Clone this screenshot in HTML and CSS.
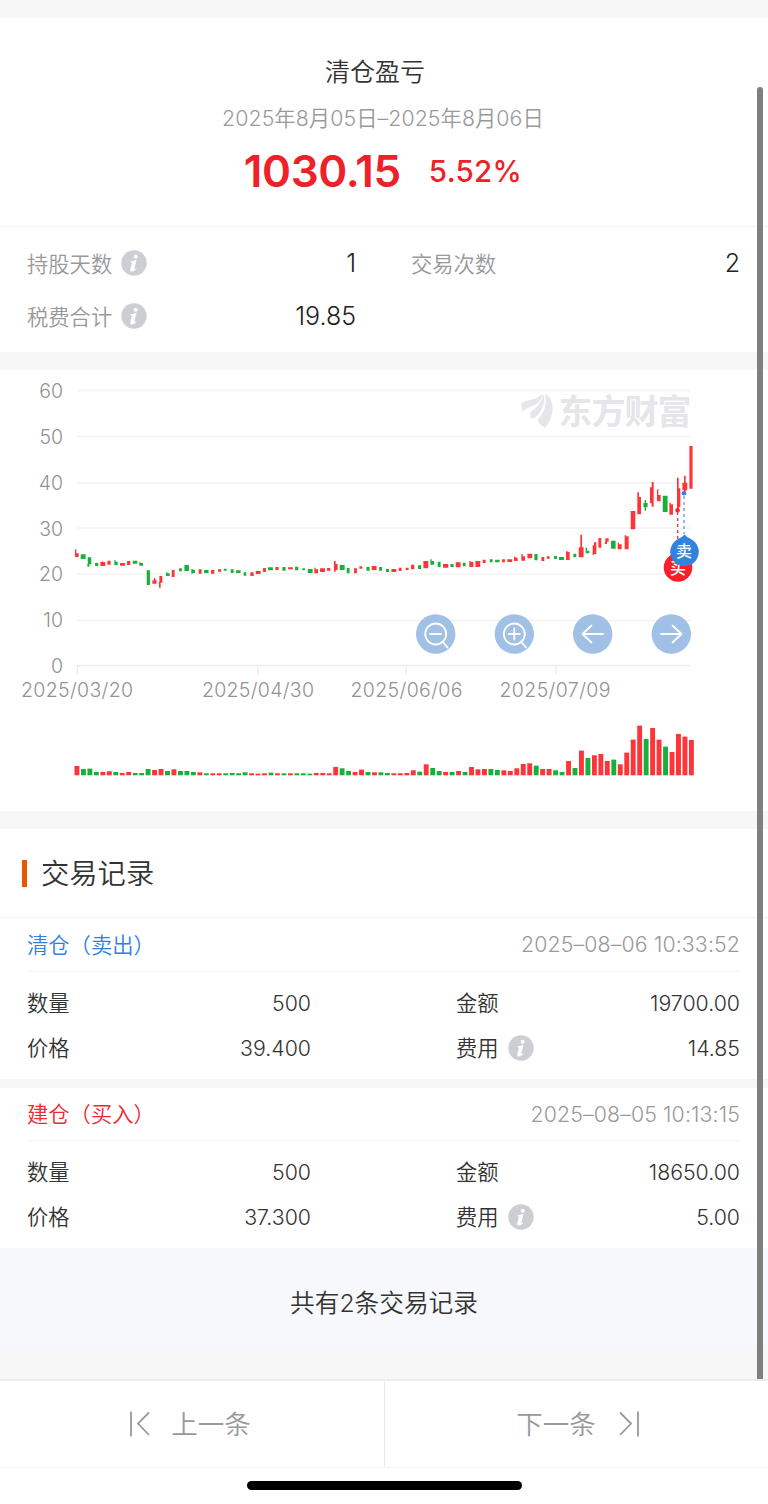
FILE: index.html
```html
<!DOCTYPE html>
<html lang="zh-CN">
<head>
<meta charset="utf-8">
<title>清仓盈亏</title>
<link rel="stylesheet" href="styles.css">
</head>
<body>
<svg width="0" height="0" class="defs">
  <symbol id="info" viewBox="0 0 26 26">
    <circle cx="13" cy="13" r="12.7" fill="#cdced3"/>
    <circle cx="14.7" cy="6.800" r="2" fill="#fff"/>
    <path d="M9.600 11.300Q12.500 11 15.600 9.800L13.300 18.800Q13.300 19.600 15.700 17.800Q13.700 21.600 11.200 21.600Q8.700 21.600 9.300 19L10.900 13Q11 12.200 9.600 12.300Z" fill="#fff"/>
  </symbol>
</svg>
<main class="page">
  <section class="summary">
    <h1 class="title">清仓盈亏</h1>
    <div class="period">2025年8月05日–2025年8月06日</div>
    <div class="profit"><span class="amount">1030.15</span><span class="percent">5.52%</span></div>
    <div class="stats">
      <div class="stat"><span>持股天数</span><svg class="info"><use href="#info"/></svg><b>1</b></div>
      <div class="stat"><span>交易次数</span><b>2</b></div>
      <div class="stat"><span>税费合计</span><svg class="info"><use href="#info"/></svg><b>19.85</b></div>
    </div>
  </section>
  <section class="chart">
    <svg width="768" height="441" viewBox="0 370 768 441">
      <path class="grid" d="M77 390.5H691M77 436.5H691M77 483H691M77 528H691M77 574H691M77 620.5H691"/>
      <path class="axis" d="M77 665.5H691M77.5 665v9M258 665v9M406 665v9M556 665v9"/>
      <g class="label" text-anchor="end">
        <text x="63" y="397.5">60</text><text x="63" y="443.5">50</text><text x="63" y="489.5">40</text><text x="63" y="535.5">30</text><text x="63" y="581">20</text><text x="63" y="627">10</text><text x="63" y="673">0</text>
      </g>
      <g class="label">
        <text x="21" y="697" textLength="112">2025/03/20</text><text x="202" y="697" textLength="112">2025/04/30</text><text x="350.500" y="697" textLength="112">2025/06/06</text><text x="499.500" y="697" textLength="111">2025/07/09</text>
      </g>
      <g class="mark">
        <path transform="translate(500 370) scale(.33333)" d="M64 98Q84 91 99 88Q118 82 128 70Q125 95 104 106Q80 112 68 125Q64 110 64 98ZM131 72Q136 100 122 123Q112 141 95 147Q88 137 91 126Q120 112 131 72ZM136 70Q158 88 158 118Q155 150 136 173Q118 165 113 149Q144 118 136 70Z"/>
        <text x="558.500" y="423.500" textLength="133">东方财富</text>
      </g>
      <g id="candles"></g>
      <path d="M677.700 512V541" stroke="#ef2f3b" stroke-width="1.300" stroke-dasharray="3 3"/>
      <path d="M684 496V534" stroke="#5c9ae8" stroke-width="1.300" stroke-dasharray="3 3"/>
      <circle cx="677.600" cy="510.300" r="2.300" fill="#f7262d"/><circle cx="684" cy="493.200" r="2.300" fill="#3482e0"/>
      <circle cx="678" cy="567.500" r="14.300" fill="#f72028"/><text class="pin" x="678" y="574">买</text>
      <path d="M684.500 534.500Q687 537.500 690.500 538.800A14.300 14.300 0 1 1 678.500 538.800Q682 537.500 684.500 534.500Z" fill="#3482e0"/><text class="pin" x="684" y="556.500">卖</text>
      <g id="volumes"></g>
      <g class="tool"><circle cx="435.700" cy="634" r="19.700"/><path d="M430 634h11M442.500 641.500l5 6"/><circle class="lens" cx="435.700" cy="634" r="10.500"/></g>
      <g class="tool"><circle cx="514.300" cy="634" r="19.700"/><path d="M508.800 634h11M514.300 628.500v11M521 641.500l5 6"/><circle class="lens" cx="514.300" cy="634" r="10.500"/></g>
      <g class="tool"><circle cx="592.700" cy="634" r="19.700"/><path d="M603 634H582.500M591.500 625.500l-9 8.500l9 8.500"/></g>
      <g class="tool"><circle cx="671.300" cy="634" r="19.700"/><path d="M661 634H681.500M672.500 625.500l9 8.500l-9 8.500"/></g>
    </svg>
  </section>
  <section class="records">
    <h2 class="heading"><span>交易记录</span></h2>
    <article class="record">
      <header class="record-head sell"><span>清仓（卖出）</span><time>2025–08–06 10:33:52</time></header>
      <div class="fields">
        <div class="field left"><span>数量</span><b>500</b></div><div class="field"><span>金额</span><b>19700.00</b></div>
        <div class="field left"><span>价格</span><b>39.400</b></div><div class="field"><span>费用</span><svg class="info"><use href="#info"/></svg><b>14.85</b></div>
      </div>
    </article>
    <article class="record">
      <header class="record-head buy"><span>建仓（买入）</span><time>2025–08–05 10:13:15</time></header>
      <div class="fields">
        <div class="field left"><span>数量</span><b>500</b></div><div class="field"><span>金额</span><b>18650.00</b></div>
        <div class="field left"><span>价格</span><b>37.300</b></div><div class="field"><span>费用</span><svg class="info"><use href="#info"/></svg><b>5.00</b></div>
      </div>
    </article>
  </section>
  <div class="total">共有2条交易记录</div>
  <nav class="pager">
    <a class="prev"><svg width="22" height="28"><path d="M2 1.500V26.500M20 2.500L9 13.500L20 25"/></svg><span>上一条</span></a>
    <a class="next"><span>下一条</span><svg width="22" height="28"><path d="M20 1.500V26.500M2 2.500L13 13.500L2 25"/></svg></a>
  </nav>
  <div class="home"><i></i></div>
  <div class="scrollbar"></div>
</main>
<script src="chart.js"></script>
</body>
</html>
```

FILE: styles.css
```css
* { box-sizing: border-box; }
body { margin: 0; background: #f7f7f7; font-family: Inter, "Noto Sans CJK SC", sans-serif; font-weight: 350; color: #333; }
b { font-weight: 350; }
.defs { position: absolute; }
.page { position: relative; width: 768px; height: 1504px; padding-top: 18px; display: flex; flex-direction: column; overflow: hidden; }
.summary { height: 334px; background: #fff; flex: none; }
.title { margin: 0; padding-top: 36px; font-size: 25px; line-height: 36px; font-weight: 350; text-align: center; padding-right: 18px; }
.period { margin-top: 13px; font-size: 21.300px; line-height: 31px; text-align: center; color: #999; padding-right: 2px; letter-spacing: .08px; }
.profit { display: flex; justify-content: center; align-items: center; gap: 28px; height: 93px; padding-bottom: 18px; border-bottom: 1px solid #f3f3f3; color: #f02028; font-weight: 500; padding-right: 2px; }
.amount { font-size: 44px; letter-spacing: -.4px; font-weight: 570; }
.percent { font-size: 29.500px; letter-spacing: .3px; }
.stats { display: grid; grid-template-columns: 329px 329px; column-gap: 55px; grid-auto-rows: 53px; padding: 9.500px 28px 0 27px; }
.stat, .field { display: flex; align-items: center; }
.stat { font-size: 21.300px; color: #999; }
.stat span { padding-bottom: 2px; }
.stat b { margin-left: auto; font-size: 25px; color: #222; }
.info { width: 26px; height: 26px; margin-left: 9px; }
.chart { height: 441px; margin: 18px 0; background: #fff; flex: none; }
.chart svg { display: block; }
.grid, .axis { fill: none; stroke: #f2f2f2; stroke-width: 1.500; }
.axis { stroke: #ededed; }
.label { font-size: 19.500px; fill: #929292; }
.mark { fill: #e5e5ea; }
.mark text { font: 700 34px "Noto Sans CJK SC", sans-serif; }
.pin { font: 500 16px "Noto Sans CJK SC", sans-serif; fill: #fff; text-anchor: middle; }
.red { fill: #ff3439; }
.green { fill: #18b03d; }
.tool circle { fill: #a1c0e5; }
.tool path, .tool .lens { fill: none; stroke: #fff; stroke-width: 1.800; stroke-linecap: round; stroke-linejoin: round; }
.records { flex: none; height: 419px; }
.heading { margin: 0; height: 89px; padding-left: 22px; display: flex; align-items: center; gap: 14px; font-size: 28.300px; font-weight: 350; background: #fff; border-bottom: 1px solid #f3f3f3; }
.heading::before { content: ""; width: 5px; height: 27px; background: #ea5504; }
.heading span { padding-bottom: 4px; }
.record { height: 161px; background: #fff; padding: 0 28px 0 27px; font-size: 21.300px; }
.record + .record { margin-top: 9px; height: 160px; }
.record-head { height: 54px; display: flex; align-items: center; justify-content: space-between; border-bottom: 1px solid #f3f3f3; }
.record-head span { padding-bottom: 3px; }
.record-head time { padding-bottom: 1px; }
.buy { height: 53px; }
.sell span { color: #2f80e2; }
.buy span { color: #ee2730; }
time { color: #999; letter-spacing: .13px; }
.fields { display: grid; grid-template-columns: 284px 284px; column-gap: 145px; grid-auto-rows: 44.500px; padding-top: 9px; }
.field span { padding-bottom: 3px; }
.field b { margin-left: auto; }
.total { flex: none; height: 131px; padding-top: 37px; text-align: center; font-size: 24.700px; line-height: 36px; background: linear-gradient(#f7f8fb 0 75%, #f7f7f7 75%); }
.pager { flex: none; height: 89px; display: grid; grid-template-columns: 385px 1fr; background: #fff; border-top: 2px solid #ededed; border-bottom: 1px solid #f3f3f3; }
.pager a { display: flex; align-items: center; justify-content: center; gap: 20px; font-size: 26.500px; color: #999; }
.pager span { padding-bottom: 3px; }
.pager svg { fill: none; stroke: #999; stroke-width: 1.800; }
.pager .prev { border-right: 1px solid #eaeaea; padding-right: 4px; }
.pager .next { gap: 22px; padding-left: 3px; }
.home { flex: 1; background: #fff; display: flex; justify-content: center; padding-top: 13px; }
.home i { width: 275px; height: 9px; border-radius: 5px; background: #000; }
.scrollbar { position: absolute; left: 757px; top: 87px; width: 5.500px; height: 1292px; border-radius: 3px 3px 0 0; background: #7f7f7f; }
```

FILE: chart.js
```js
const NS = "http://www.w3.org/2000/svg";

function addPath(parent, cls, d, transform) {
  const p = document.createElementNS(NS, "path");
  p.setAttribute("class", cls);
  p.setAttribute("d", d);
  if (transform) p.setAttribute("transform", transform);
  parent.appendChild(p);
}

// Candle bodies and wicks, "left right top bottom" in thirds of a pixel.
const batches = [
  { x: 60, y: 530,
    red: "45 49 58 81,49 56 70 81,120 137 96 108,126 129 94 97,141 153 92 104,179 196 99 107,200 212 93 105,276 291 151 161,282 286 144 152,297 308 138 158,297 302 157 173,334 345 120 141,415 426 118 131,452 464 120 131,473 485 118 125,570 582 127 138,586 603 123 132,608 619 114 126",
    green: "61 78 73 87,82 95 82 103,82 88 102 110,104 116 99 108,163 167 91 105,167 173 95 105,217 233 92 101,238 242 97 107,242 249 99 107,259 271 121 165,318 322 127 138,322 329 130 138,356 367 115 124,372 388 105 123,394 398 117 131,398 405 119 129,431 447 120 129,490 501 116 122,511 522 118 129,527 543 121 129,550 560 127 137,623 640 112 121" },
  { x: 270, y: 530,
    red: "15 27 111 120,53 70 112 118,133 137 113 130,137 144 118 130,149 166 115 126,170 182 114 122,192 197 93 125,196 203 102 120,251 262 115 130,267 278 109 116,304 321 108 120,363 380 117 126,385 396 113 123,406 417 113 120,422 434 104 118,459 476 93 115,518 536 102 113,556 573 97 112,598 602 93 111,602 610 96 111,615 632 93 111,637 648 89 99",
    green: "36 48 111 122,74 86 110 121,96 106 115 121,112 129 117 129,208 225 105 120,229 240 114 130,288 300 111 122,326 337 111 122,347 358 117 126,443 455 106 117,481 485 88 104,485 492 93 104,502 513 95 111,540 552 102 111,577 588 98 109" },
  { x: 480, y: 500,
    red: "65 76 178 187,81 98 178 186,102 107 170 183,107 113 173 183,124 128 162 182,128 135 169 182,141 158 161 175,183 194 171 183,199 210 169 176,258 263 154 180,263 269 156 180,295 312 142 172,301 306 104 143,338 342 136 165,342 349 127 162,354 365 114 143,375 387 115 125,375 381 124 132,413 417 128 148,417 425 133 148,434 438 106 148,438 446 109 148,451 467 33 88",
    green: "28 39 178 187,44 60 179 187,162 174 162 181,221 232 168 177,236 253 171 180,279 290 161 172,317 321 143 160,321 328 152 160,392 408 122 146" },
  { x: 500, y: 370,
    red: "412 417 367 433,417 423 381 433,450 455 352 400,455 461 336 410,471 475 358 394,475 482 375 394,508 512 398 434,512 519 403 434,531 536 323 417,535 541 355 412,546 563 338 361,552 557 317 370,567 579 228 356",
    green: "429 444 399 412,434 438 390 422,487 504 377 426" }
];
const candles = document.getElementById("candles");
for (const batch of batches) {
  for (const color of ["red", "green"]) {
    const d = batch[color].split(",").map(function (item) {
      const [l, r, t, b] = item.split(" ").map(Number);
      const trim = r - l > 9 ? 1.2 : 0;
      return `M${l + trim} ${t}H${r - trim}V${b}H${l + trim}Z`;
    }).join("");
    addPath(candles, color, d, `translate(${batch.x} ${batch.y}) scale(.33333)`);
  }
}

// Daily volume: direction and bar height in thirds of a pixel.
const volume = "R28 G19 G20 G10 R10 R12 G10 R7 R10 G7 G7 G19 R16 R19 G13 R18 G13 G13 G10 R9 G6 R6 R6 G6 G7 G6 G9 R6 R5 R6 G8 R6 G6 R6 G6 G6 G5 R7 R7 R6 R25 G21 G13 R10 R17 G10 R9 G9 G7 R6 R6 R7 R15 G11 R33 G22 G13 R10 G10 R13 G10 R25 R18 R19 G19 G16 R15 R13 R21 R34 R36 G29 R19 R19 G15 G10 R43 G22 R74 G52 R60 R64 R43 G47 R33 R68 R107 R149 G109 R142 R107 G86 R70 R124 R116 R106".split(" ");
const volumes = document.getElementById("volumes");
volume.forEach(function (v, i) {
  const x = 74.5 + i * 6.468;
  const h = Number(v.slice(1)) / 3;
  addPath(volumes, v[0] === "R" ? "red" : "green", `M${x} 775.300h4.900v${-h}h-4.900z`);
});
```
